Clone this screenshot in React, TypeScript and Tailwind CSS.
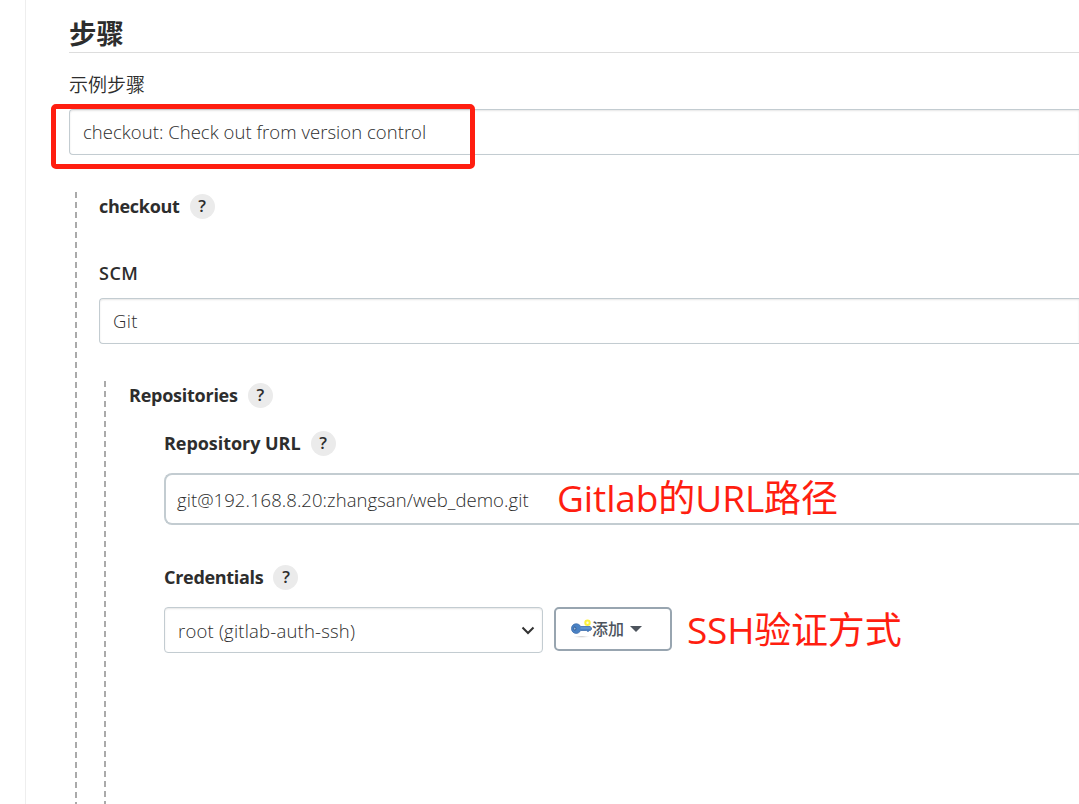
import type { ReactNode } from "react";

function Label({ text, help, className = "" }: { text: ReactNode; help?: boolean; className?: string }) {
  return (
    <div className={`flex items-center h-7 text-[18px] ${className}`}>
      <span>{text}</span>
      {help && (
        <button
          type="button"
          className="ml-[10px] flex size-[25px] items-center justify-center rounded-full bg-[#ebebeb] text-[17px] font-semibold"
        >
          ?
        </button>
      )}
    </div>
  );
}

function KeyIcon() {
  return (
    <svg width="21" height="20" viewBox="0 0 21 20" fill="none">
      <defs>
        <radialGradient id="shade">
          <stop offset="0" stopColor="#b5b5b5" />
          <stop offset="1" stopColor="#ffffff" stopOpacity="0" />
        </radialGradient>
      </defs>
      <ellipse cx="10.5" cy="17.8" rx="10" ry="1.2" fill="url(#shade)" />
      <circle cx="16.5" cy="3.8" r="2.2" fill="#fffde0" stroke="#fdf23c" strokeWidth="2" />
      <path
        d="M5.2 4.8c2 0 3.600 1 4.400 2.700h9.600l1.300 1.500v1.300l-1.100 1.200h-1.200l-.5.8h-1.500l-.6-.8h-6c-.8 1.700-2.400 2.900-4.400 2.900C2.500 14.400.5 12.400.5 9.600s2-4.800 4.700-4.800z"
        fill="#4a82c4"
        stroke="#3d6dac"
        strokeWidth="0.8"
      />
      <path d="M9.500 9h10" stroke="#7ba6d8" strokeWidth="1" />
      <ellipse cx="3.800" cy="9.600" rx="1.100" ry="1.600" fill="#b4cbe6" stroke="#2c568c" strokeWidth="0.9" />
    </svg>
  );
}

export default function App() {
  return (
    <div className="relative flex h-[804px] w-[1079px] overflow-hidden bg-white font-['Open_Sans','Noto_Sans_CJK_SC',sans-serif] font-[360] text-[#2d2d2d]">
      <div className="w-[26px] shrink-0 border-r border-[#eee]" />

      <div className="flex flex-1 flex-col pl-[43px]">
        {/* Section header */}
        <h1 className="flex h-[53px] items-end border-b border-[#ddd] pb-[2px] text-[27.5px] leading-[32px] font-bold">
          步骤
        </h1>

        <div className="mt-[17px] flex h-7 items-center font-['Noto_Sans_CJK_SC',sans-serif] text-[19px] font-[350]">
          示例步骤
        </div>
        <div className="mt-[11px] flex h-[46px] items-center rounded-l-[4px] border border-r-0 border-[#c3ccd1] pl-[13px] text-[18.5px] tracking-[0.04px] shadow-[inset_0_1px_2px_#0000001a]">
          checkout: Check out from version control
        </div>

        {/* Checkout step */}
        <div className="mt-[37px] ml-[6px] flex flex-1">
          <div className="w-[2px] bg-[repeating-linear-gradient(#aaa_0_6px,#fff_6px_10px)]" />
          <div className="flex flex-1 flex-col">
            <div className="ml-[22px]">
              <Label text="checkout" help className="font-bold tracking-[-0.3px]" />
              <Label text="SCM" className="mt-[39px] font-semibold tracking-[0.5px]" />
              <div className="mt-[11px] flex h-[46px] items-center rounded-l-[4px] border border-r-0 border-[#c3ccd1] pl-[13px] text-[18.5px] tracking-[0.3px] shadow-[inset_0_1px_2px_#0000001a]">
                Git
              </div>
            </div>

            {/* Repositories */}
            <div className="mt-[37px] ml-[27px] flex flex-1">
              <div className="w-[2px] bg-[repeating-linear-gradient(#aaa_0_6px,#fff_6px_10px)]" />
              <div className="ml-[23px] flex-1">
                <Label text="Repositories" help className="font-bold tracking-[-0.25px]" />

                <div className="ml-[35px]">
                  <Label text="Repository URL" help className="mt-5 font-bold tracking-[-0.05px]" />
                  <div className="mt-4 flex h-[52px] items-center rounded-l-[8px] border-2 border-r-0 border-[#c3ccd1] pt-[2px] pl-[11px] text-[18.5px] tracking-[0.06px]">
                    git@192.168.8.20:zhangsan/web_demo.git
                  </div>

                  <Label text="Credentials" help className="mt-[38px] font-bold tracking-[-0.3px]" />
                  <div className="mt-4 flex items-start">
                    <div className="flex h-[46px] w-[379px] items-center justify-between rounded-[4px] border border-[#c3ccd1] pt-px pr-[7px] pl-[13px] text-[18.5px] tracking-[0.2px] shadow-[inset_0_1px_2px_#0000001a]">
                      root (gitlab-auth-ssh)
                      <svg width="14" height="9" viewBox="0 0 14 9" fill="none">
                        <path d="M1.500 1.500L7 7l5.500-5.500" stroke="#333" strokeWidth="2" />
                      </svg>
                    </div>
                    <button
                      type="button"
                      className="ml-[11px] flex h-[44px] w-[118px] items-center rounded-[5px] border-2 border-[#98a5b0] pl-[15px] text-[16px] font-medium text-[#4d545d]"
                    >
                      <KeyIcon />
                      添加
                      <svg className="ml-[6px]" width="12" height="6" viewBox="0 0 12 6">
                        <path d="M0 0h12L6 6z" fill="#4d545d" />
                      </svg>
                    </button>
                  </div>
                </div>
              </div>
            </div>
          </div>
        </div>
      </div>

      {/* Red annotations */}
      <div className="absolute top-[104px] left-[51px] h-[65px] w-[424px] rounded-[5px] border-5 border-[#ff1e10]" />
      <span className="absolute top-[472px] left-[557px] whitespace-nowrap text-[37px] leading-[52px] font-normal tracking-[-0.1px] text-[#ff1e10]">
        Gitlab的URL路径
      </span>
      <span className="absolute top-[604px] left-[687px] whitespace-nowrap text-[37px] leading-[52px] font-normal tracking-[-0.2px] text-[#ff1e10]">
        SSH验证方式
      </span>
    </div>
  );
}
